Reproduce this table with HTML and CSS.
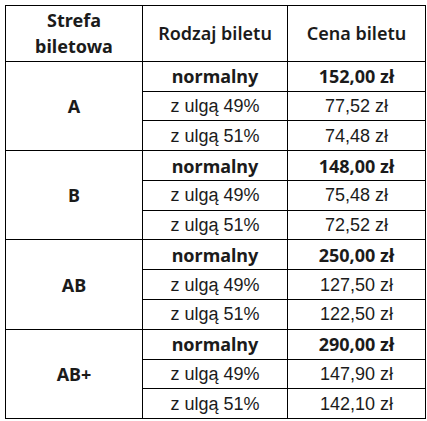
FILE: index.html
```html
<!DOCTYPE html>
<html lang="pl">
<head>
<meta charset="utf-8">
<title>Ceny biletów</title>
<link rel="stylesheet" href="styles.css">
</head>
<body>
<div class="wrap">
<table class="prices">
  <colgroup>
    <col class="c-zone">
    <col class="c-type">
    <col class="c-price">
  </colgroup>
  <thead>
    <tr>
      <th class="h-zone">Strefa<br>biletowa</th>
      <th class="h-semi">Rodzaj biletu</th>
      <th class="h-semi">Cena biletu</th>
    </tr>
  </thead>
  <tbody>
    <tr><td rowspan="3" class="zone">A</td><td class="b">normalny</td><td class="b">152,00 zł</td></tr>
    <tr><td>z ulgą 49%</td><td>77,52 zł</td></tr>
    <tr><td>z ulgą 51%</td><td>74,48 zł</td></tr>
    <tr><td rowspan="3" class="zone">B</td><td class="b">normalny</td><td class="b">148,00 zł</td></tr>
    <tr><td>z ulgą 49%</td><td>75,48 zł</td></tr>
    <tr><td>z ulgą 51%</td><td>72,52 zł</td></tr>
    <tr><td rowspan="3" class="zone">AB</td><td class="b">normalny</td><td class="b">250,00 zł</td></tr>
    <tr><td>z ulgą 49%</td><td>127,50 zł</td></tr>
    <tr><td>z ulgą 51%</td><td>122,50 zł</td></tr>
    <tr><td rowspan="3" class="zone">AB+</td><td class="b">normalny</td><td class="b">290,00 zł</td></tr>
    <tr><td>z ulgą 49%</td><td>147,90 zł</td></tr>
    <tr><td>z ulgą 51%</td><td>142,10 zł</td></tr>
  </tbody>
</table>
</div>
</body>
</html>
```
FILE: styles.css
```css
html, body {
  margin: 0;
  padding: 0;
  background: #ffffff;
}
.wrap {
  padding: 5px 0 0 5px;
}
.prices {
  border-collapse: collapse;
  table-layout: fixed;
  width: 420px;
  color: #1b1b1b;
  font-family: "Liberation Sans", Arial, sans-serif;
  font-size: 18px;
  line-height: 26px;
}
.c-zone { width: 137px; }
.c-type { width: 145px; }
.c-price { width: 138px; }
.prices th,
.prices td {
  border: 1px solid #000;
  padding: 1.4px 4px;
  text-align: center;
  vertical-align: middle;
  white-space: nowrap;
}
.prices th {
  font-family: "Noto Sans", sans-serif;
  font-weight: 700;
}
.prices th.h-semi {
  font-weight: 600;
}
.prices td.b,
.prices td.zone {
  font-family: "Noto Sans", sans-serif;
  font-weight: 700;
}
```
